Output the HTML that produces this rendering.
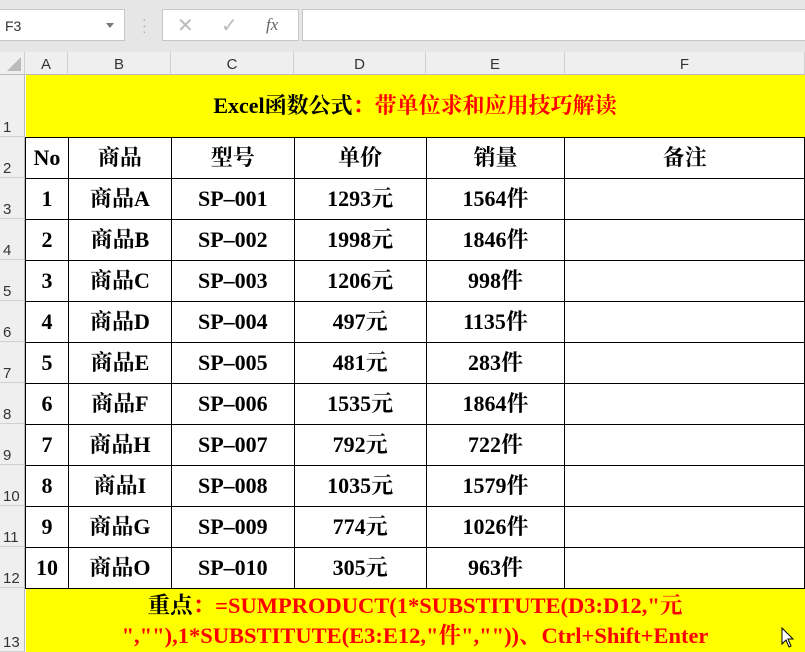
<!DOCTYPE html><html><head><style>
*{margin:0;padding:0;box-sizing:border-box}
body{width:805px;height:652px;overflow:hidden;background:#fff;font-family:"Liberation Sans",sans-serif;position:relative}
.top{position:absolute;left:0;top:0;width:805px;height:52px;background:#e6e6e6}
.nb{position:absolute;left:-2px;top:9px;width:127px;height:32px;background:#fff;border:1px solid #c6c6c6;font-size:14px;color:#333;padding:8px 6px}
.nb:after{content:"";position:absolute;right:10px;top:13px;border:4px solid transparent;border-top:5px solid #777}
.fb1{position:absolute;left:162px;top:9px;width:137px;height:32px;background:#fff;border:1px solid #c6c6c6}
.fb2{position:absolute;left:302px;top:9px;width:510px;height:32px;background:#fff;border:1px solid #c6c6c6}
.ch{position:absolute;top:52px;height:23px;background:#efefef;border-right:1px solid #d0d0d0;border-bottom:1px solid #bbb;font-size:15px;color:#333;text-align:center;line-height:26px}
.rh{position:absolute;left:0;width:25px;background:#efefef;border-bottom:1px solid #d0d0d0;border-right:1px solid #bbb;font-size:15px;color:#333;padding-left:3px;display:flex;align-items:flex-end}
table{position:absolute;left:25px;top:75px;border-collapse:collapse;font-family:"Liberation Serif","Noto Serif CJK SC",serif;font-weight:bold;font-size:22px;table-layout:fixed}
td{border:1px solid #000;text-align:center;height:41px;padding:0;line-height:40px;overflow:hidden;white-space:nowrap}
.y{background:#ff0;border:none}
.r{color:#f00}
</style></head><body>
<div class="top"></div>
<div class="nb">F3</div>
<div style="position:absolute;left:142px;top:16px;color:#aaa;font-size:14px;line-height:6px">·<br>·<br>·</div>
<div class="fb1"><span style="position:absolute;left:14px;top:3px;color:#bbb;font-size:20px">✕</span><span style="position:absolute;left:58px;top:3px;color:#bbb;font-size:20px">✓</span><span style="position:absolute;left:103px;top:5px;color:#666;font-family:'Liberation Serif',serif;font-style:italic;font-size:17px">fx</span></div>
<div class="fb2"></div>
<div class="ch" style="left:0;width:25px"><div style="position:absolute;left:7px;top:5px;width:0;height:0;border-left:14px solid transparent;border-bottom:14px solid #bbb"></div></div>
<div class="ch" style="left:25px;width:43px">A</div>
<div class="ch" style="left:68px;width:103px">B</div>
<div class="ch" style="left:171px;width:123px">C</div>
<div class="ch" style="left:294px;width:132px">D</div>
<div class="ch" style="left:426px;width:139px">E</div>
<div class="ch" style="left:565px;width:240px">F</div>
<div class="rh" style="top:75px;height:62px">1</div>
<div class="rh" style="top:137px;height:41px">2</div>
<div class="rh" style="top:178px;height:41px">3</div>
<div class="rh" style="top:219px;height:41px">4</div>
<div class="rh" style="top:260px;height:41px">5</div>
<div class="rh" style="top:301px;height:41px">6</div>
<div class="rh" style="top:342px;height:41px">7</div>
<div class="rh" style="top:383px;height:41px">8</div>
<div class="rh" style="top:424px;height:41px">9</div>
<div class="rh" style="top:465px;height:41px">10</div>
<div class="rh" style="top:506px;height:41px">11</div>
<div class="rh" style="top:547px;height:41px">12</div>
<div class="rh" style="top:588px;height:64px">13</div>
<table>
<colgroup><col style="width:43px"><col style="width:103px"><col style="width:123px"><col style="width:132px"><col style="width:139px"><col style="width:240px"></colgroup>
<tr><td colspan="6" class="y" style="height:62px;line-height:56px;border-bottom:1px solid #000">Excel函数公式<span class="r">：带单位求和应用技巧解读</span></td></tr>
<tr><td>No</td><td>商品</td><td>型号</td><td>单价</td><td>销量</td><td>备注</td></tr>
<tr><td>1</td><td>商品A</td><td>SP–001</td><td>1293元</td><td>1564件</td><td></td></tr>
<tr><td>2</td><td>商品B</td><td>SP–002</td><td>1998元</td><td>1846件</td><td></td></tr>
<tr><td>3</td><td>商品C</td><td>SP–003</td><td>1206元</td><td>998件</td><td></td></tr>
<tr><td>4</td><td>商品D</td><td>SP–004</td><td>497元</td><td>1135件</td><td></td></tr>
<tr><td>5</td><td>商品E</td><td>SP–005</td><td>481元</td><td>283件</td><td></td></tr>
<tr><td>6</td><td>商品F</td><td>SP–006</td><td>1535元</td><td>1864件</td><td></td></tr>
<tr><td>7</td><td>商品H</td><td>SP–007</td><td>792元</td><td>722件</td><td></td></tr>
<tr><td>8</td><td>商品I</td><td>SP–008</td><td>1035元</td><td>1579件</td><td></td></tr>
<tr><td>9</td><td>商品G</td><td>SP–009</td><td>774元</td><td>1026件</td><td></td></tr>
<tr><td>10</td><td>商品O</td><td>SP–010</td><td>305元</td><td>963件</td><td></td></tr>
<tr><td colspan="6" class="y" style="height:64px;line-height:30px;padding-top:2px;vertical-align:top;border-top:1px solid #000;font-size:22.5px">重点<span class="r">：=SUMPRODUCT(1*SUBSTITUTE(D3:D12,"元<br>",""),1*SUBSTITUTE(E3:E12,"件",""))、Ctrl+Shift+Enter</span></td></tr>
</table>
<svg style="position:absolute;left:781px;top:627px" width="14" height="22" viewBox="0 0 14 22"><path d="M1 1 L1 17 L5 13 L8 20 L10 19 L7 12 L12 12 Z" fill="#fff" stroke="#000" stroke-width="1"/></svg>
</body></html>
